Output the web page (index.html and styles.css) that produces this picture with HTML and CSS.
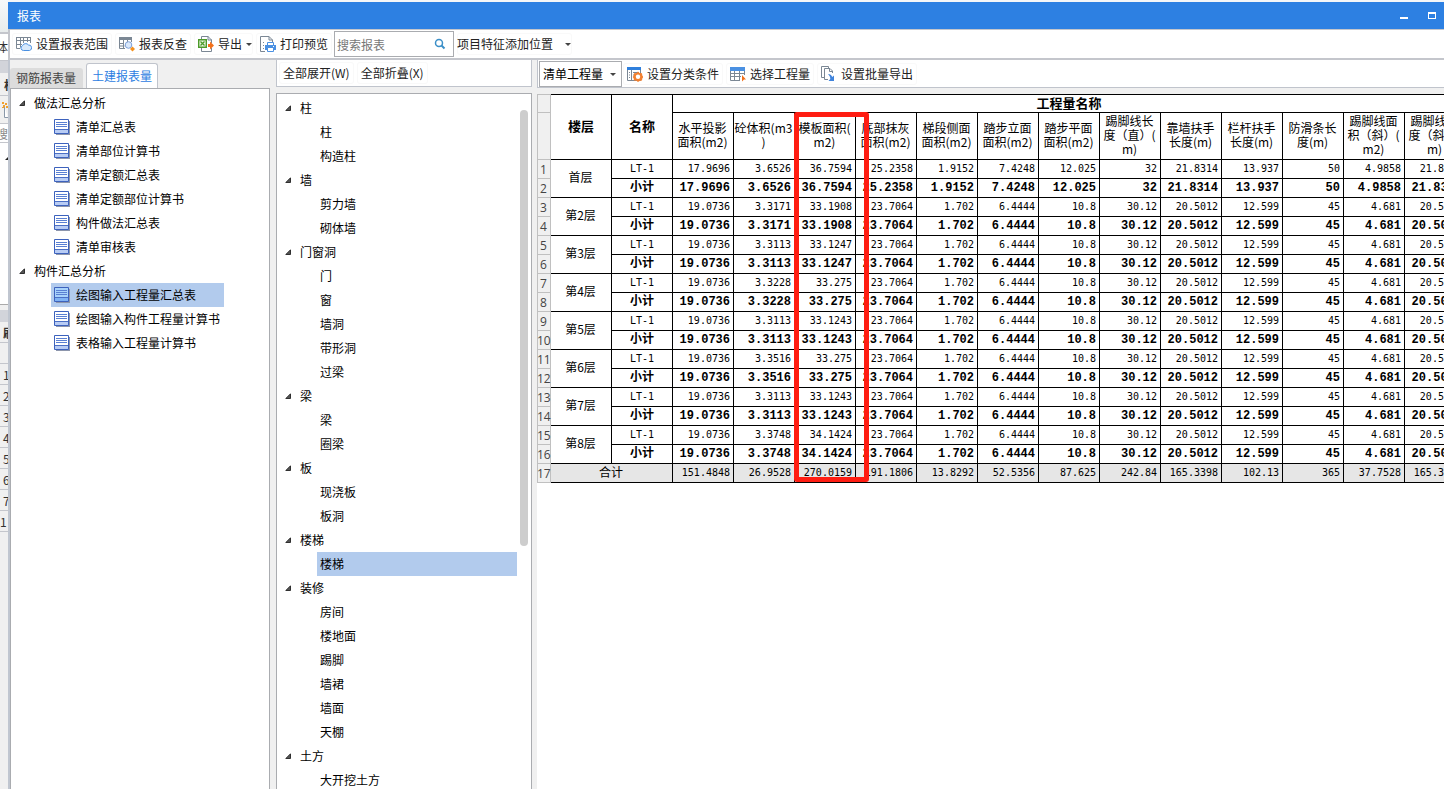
FILE: index.html
```html
<!DOCTYPE html>
<html lang="zh-CN">
<head>
<meta charset="utf-8">
<title>报表</title>
<link rel="stylesheet" href="styles.css">
</head>
<body>
<svg class="defs" aria-hidden="true">
  <symbol id="doc" viewBox="0 0 16 16">
    <path fill="#8d96ac" d="M2 2h14v14H2z"/>
    <path class="doc-page" d="M.5.5h14v14H.5z" stroke="#3d62bd"/>
    <path class="doc-foot" d="M1 11h13v3H1z"/>
    <path d="M1 10.5h13" stroke="#4b6fc4"/>
    <path d="M2 3.5h11M2 5.5h11M2 7.5h11" stroke="#5a80d2"/>
  </symbol>
  <symbol id="tri" viewBox="0 0 6 6"><path d="M5.500 .8v4.700H.8z" fill="#555" stroke="#222" stroke-width=".9"/></symbol>
</svg>
<div class="desktop">
  <aside class="behind" aria-hidden="true">
    <div class="b-top"></div>
    <div class="b-line1">体</div>
    <div class="b-band"></div>
    <div class="b-head">构</div>
    <div class="b-icon"><svg width="8" height="16"><path d="M4.500 5v10.500H8" fill="#fff" stroke="#8a98a8"/><path d="M2 0h2v2H2zM5 1h2v2H5zM3 3h2v2H3zM6 4h2v2H6zM2 5h2v1H2z" fill="#f0a030"/></svg></div>
    <div class="b-search">搜</div>
    <div class="b-blank"><svg width="3" height="3"><path d="M3 0v3H0z" fill="#222"/></svg></div>
    <div class="b-gap"></div>
    <div class="b-band2"></div>
    <div class="b-row b-strong">刷</div>
    <div class="b-row"></div>
    <div class="b-row">1</div><div class="b-row">2</div><div class="b-row">3</div><div class="b-row">4</div><div class="b-row">5</div><div class="b-row">6</div><div class="b-row">7</div><div class="b-row b-wide">1</div>
  </aside>
  <main class="window">
    <header class="titlebar">
      <h1>报表</h1>
      <button class="winbtn" aria-label="最小化"><svg width="8" height="8"><path d="M0 5h8v2H0z" fill="#fff"/></svg></button>
      <button class="winbtn" aria-label="最大化"><svg width="8" height="8"><path d="M0 0h8v7H0zM1 2v4h6V2z" fill="#fff" fill-rule="evenodd"/></svg></button>
    </header>
    <div class="toolbar main-tools">
      <button class="tool"><svg width="16" height="16" fill="none"><path d="M4 12.500H.5V1.500h14V7M.5 4.500h14M.5 8.500H6M4.500 1.500v10M7.500 1.500V7M11.500 1.500V6" stroke="#7b8794"/><path d="M0 1h15v1H0z" fill="#7b8794"/><path d="M7.500 14.500a2.500 2.500 0 0 1-1-4.800 3.500 3.500 0 0 1 6-.7 2.800 2.800 0 0 1 1 5.500z" fill="#d8e9fb" stroke="#4a90e2"/></svg>设置报表范围</button>
      <button class="tool"><svg width="16" height="16" fill="none"><path d="M0 1h13v3H0z" fill="#7b8794"/><path d="M.5 2v10.500H6M.5 7.500H5M.5 10h5M4.500 3v9M8.500 3v3M12.500 3v3" stroke="#7b8794"/><circle cx="9.500" cy="9" r="3.300" fill="#d9e8fb" stroke="#7da0d8"/><path d="M13.500 10.500l2.500 2.500-2.500 2.500-2.500-2.500z" fill="#f5921e"/></svg>报表反查</button>
      <button class="tool has-menu"><svg width="16" height="16" fill="none"><path d="M3.500 3V.5H10L13.500 4v3M13.500 12v3.500h-10V12" stroke="#7b8794"/><path d="M10 0v4h4" stroke="#7b8794"/><path d="M.7 3.700h7.600v7.600H.7z" fill="#eaf6e2" stroke="#4c9a2a" stroke-width="1.400"/><path d="M2.500 5.500l4 4M6.500 5.500l-4 4" stroke="#4c9a2a" stroke-width="1.300"/><path d="M10 8h2V5.500l4 4-4 4V11h-2z" fill="#f2711c"/></svg>导出<i class="caret"></i></button>
      <button class="tool"><svg width="16" height="16" fill="none"><path d="M5 15.500H.5V.5H9L12.500 4v2M9 .5V4h3.500" stroke="#7b8794"/><path d="M3 6.500h2M3 9.500h1M3 12.500h1" stroke="#7b8794" stroke-dasharray="1 1"/><path d="M7.500 9V6.500h6V9" fill="#fff" stroke="#4a90e2"/><path d="M5 9h11v5H5z" fill="#4a90e2"/><path d="M7.500 11.500h6v4h-6z" fill="#fff" stroke="#4a90e2"/><path d="M13 10h1v1h-1z" fill="#fff"/></svg>打印预览</button>
      <label class="search"><input type="text" placeholder="搜索报表" aria-label="搜索报表"><svg width="12" height="12" fill="none"><circle cx="5" cy="5" r="3.500" stroke="#3b8fc8" stroke-width="1.500"/><path d="M7.500 7.500l3 3" stroke="#3b8fc8" stroke-width="2"/></svg></label>
      <button class="tool position">项目特征添加位置<i class="caret"></i></button>
    </div>
    <div class="panes">
      <section class="reports">
        <nav class="tabs"><button class="tab">钢筋报表量</button><button class="tab active">土建报表量</button></nav>
        <div class="tree box">
          <div class="group"><svg><use href="#tri"/></svg>做法汇总分析</div>
          <button class="leaf"><svg><use href="#doc"/></svg>清单汇总表</button>
          <button class="leaf"><svg><use href="#doc"/></svg>清单部位计算书</button>
          <button class="leaf"><svg><use href="#doc"/></svg>清单定额汇总表</button>
          <button class="leaf"><svg><use href="#doc"/></svg>清单定额部位计算书</button>
          <button class="leaf"><svg><use href="#doc"/></svg>构件做法汇总表</button>
          <button class="leaf"><svg><use href="#doc"/></svg>清单审核表</button>
          <div class="group"><svg><use href="#tri"/></svg>构件汇总分析</div>
          <button class="leaf selected"><svg><use href="#doc"/></svg>绘图输入工程量汇总表</button>
          <button class="leaf"><svg><use href="#doc"/></svg>绘图输入构件工程量计算书</button>
          <button class="leaf"><svg><use href="#doc"/></svg>表格输入工程量计算书</button>
        </div>
      </section>
      <section class="elements">
        <div class="toolbar sub-tools"><button class="tool">全部展开(W)</button><button class="tool">全部折叠(X)</button></div>
        <div class="tree box">
          <div class="nodes">
            <div class="group"><svg><use href="#tri"/></svg>柱</div>
            <button class="leaf">柱</button><button class="leaf">构造柱</button>
            <div class="group"><svg><use href="#tri"/></svg>墙</div>
            <button class="leaf">剪力墙</button><button class="leaf">砌体墙</button>
            <div class="group"><svg><use href="#tri"/></svg>门窗洞</div>
            <button class="leaf">门</button><button class="leaf">窗</button><button class="leaf">墙洞</button><button class="leaf">带形洞</button><button class="leaf">过梁</button>
            <div class="group"><svg><use href="#tri"/></svg>梁</div>
            <button class="leaf">梁</button><button class="leaf">圈梁</button>
            <div class="group"><svg><use href="#tri"/></svg>板</div>
            <button class="leaf">现浇板</button><button class="leaf">板洞</button>
            <div class="group"><svg><use href="#tri"/></svg>楼梯</div>
            <button class="leaf selected">楼梯</button>
            <div class="group"><svg><use href="#tri"/></svg>装修</div>
            <button class="leaf">房间</button><button class="leaf">楼地面</button><button class="leaf">踢脚</button><button class="leaf">墙裙</button><button class="leaf">墙面</button><button class="leaf">天棚</button>
            <div class="group"><svg><use href="#tri"/></svg>土方</div>
            <button class="leaf">大开挖土方</button>
          </div>
          <div class="scroll"><div class="thumb"></div></div>
        </div>
      </section>
      <section class="result">
        <div class="toolbar grid-tools">
          <label class="picker"><select aria-label="工程量类型"><option>清单工程量</option></select><i class="caret"></i></label>
          <button class="tool"><svg width="16" height="16" fill="none"><path d="M.5 1.500h13v13H.5z" fill="#fff" stroke="#7b8794"/><path d="M0 1h14v3H0z" fill="#2f7fdc"/><path d="M4.500 4v10" stroke="#7b8794"/><path d="M2 6.500h1M2 9h1M2 11.500h1M6 6.500h6M6 9h2" stroke="#7b8794"/><path d="M11 5.500l1.500 1.500 2.500.3.300 2.200 1 1.500-1 1.500-.3 2-2.500.5L11 16l-1.500-1.200-2.500-.3-.3-2-1-1.500 1-1.500.3-2.200 2.500-.3z" fill="#f28030"/><circle cx="11" cy="10.800" r="2.200" fill="#fff"/></svg>设置分类条件</button>
          <button class="tool"><svg width="16" height="16" fill="none"><path d="M.5 1.500h14v12H.5z" fill="#fff"/><path d="M.5 4v10.500H10M14.500 4v5M0 7.500h15M0 10.500h11M4.500 4v10M9.500 4v10" stroke="#7b8794"/><path d="M0 1h15v4H0z" fill="#4a90e2"/><path d="M12 9l4 4.500h-2l-2 2z" fill="#f2711c"/></svg>选择工程量</button>
          <button class="tool"><svg width="16" height="16" fill="none"><path d="M3 11.500H.5V.5h7V2" stroke="#7b8794"/><path d="M7 13.500H3.500V2.500H9L11.500 5v2M8.500 2.500v3h3" stroke="#7b8794"/><path d="M7 8c2 0 3.500 1 4.300 3L13 9.500V15H7.500L9.300 13C9.300 11 8.500 9.500 7 8z" fill="#3f83dc"/></svg>设置批量导出</button>
        </div>
        <div class="sheet">
          <table>
            <colgroup><col class="c-num"><col span="15" class="c-data"></colgroup>
            <thead>
              <tr class="h1"><th class="n"></th><th rowspan="2">楼层</th><th rowspan="2">名称</th><th colspan="13">工程量名称</th></tr>
              <tr class="h2"><th class="n"></th><th>水平投影<br>面积(m2)</th><th>砼体积(m3<br>)</th><th>模板面积(<br>m2)</th><th>底部抹灰<br>面积(m2)</th><th>梯段侧面<br>面积(m2)</th><th>踏步立面<br>面积(m2)</th><th>踏步平面<br>面积(m2)</th><th>踢脚线长<br>度（直）(<br>m)</th><th>靠墙扶手<br>长度(m)</th><th>栏杆扶手<br>长度(m)</th><th>防滑条长<br>度(m)</th><th>踢脚线面<br>积（斜）(<br>m2)</th><th>踢脚线长<br>度（斜）(<br>m)</th></tr>
            </thead>
            <tbody>
              <tr><th class="n">1<th class="floor" rowspan="2">首层<td class="name">LT-1<td>17.9696<td>3.6526<td>36.7594<td>25.2358<td>1.9152<td>7.4248<td>12.025<td>32<td>21.8314<td>13.937<td>50<td>4.9858<td>21.8314
              <tr class="sub"><th class="n">2<td class="name">小计<td>17.9696<td>3.6526<td>36.7594<td>25.2358<td>1.9152<td>7.4248<td>12.025<td>32<td>21.8314<td>13.937<td>50<td>4.9858<td>21.8314
              <tr><th class="n">3<th class="floor" rowspan="2">第2层<td class="name">LT-1<td>19.0736<td>3.3171<td>33.1908<td>23.7064<td>1.702<td>6.4444<td>10.8<td>30.12<td>20.5012<td>12.599<td>45<td>4.681<td>20.5012
              <tr class="sub"><th class="n">4<td class="name">小计<td>19.0736<td>3.3171<td>33.1908<td>23.7064<td>1.702<td>6.4444<td>10.8<td>30.12<td>20.5012<td>12.599<td>45<td>4.681<td>20.5012
              <tr><th class="n">5<th class="floor" rowspan="2">第3层<td class="name">LT-1<td>19.0736<td>3.3113<td>33.1247<td>23.7064<td>1.702<td>6.4444<td>10.8<td>30.12<td>20.5012<td>12.599<td>45<td>4.681<td>20.5012
              <tr class="sub"><th class="n">6<td class="name">小计<td>19.0736<td>3.3113<td>33.1247<td>23.7064<td>1.702<td>6.4444<td>10.8<td>30.12<td>20.5012<td>12.599<td>45<td>4.681<td>20.5012
              <tr><th class="n">7<th class="floor" rowspan="2">第4层<td class="name">LT-1<td>19.0736<td>3.3228<td>33.275<td>23.7064<td>1.702<td>6.4444<td>10.8<td>30.12<td>20.5012<td>12.599<td>45<td>4.681<td>20.5012
              <tr class="sub"><th class="n">8<td class="name">小计<td>19.0736<td>3.3228<td>33.275<td>23.7064<td>1.702<td>6.4444<td>10.8<td>30.12<td>20.5012<td>12.599<td>45<td>4.681<td>20.5012
              <tr><th class="n">9<th class="floor" rowspan="2">第5层<td class="name">LT-1<td>19.0736<td>3.3113<td>33.1243<td>23.7064<td>1.702<td>6.4444<td>10.8<td>30.12<td>20.5012<td>12.599<td>45<td>4.681<td>20.5012
              <tr class="sub"><th class="n">10<td class="name">小计<td>19.0736<td>3.3113<td>33.1243<td>23.7064<td>1.702<td>6.4444<td>10.8<td>30.12<td>20.5012<td>12.599<td>45<td>4.681<td>20.5012
              <tr><th class="n">11<th class="floor" rowspan="2">第6层<td class="name">LT-1<td>19.0736<td>3.3516<td>33.275<td>23.7064<td>1.702<td>6.4444<td>10.8<td>30.12<td>20.5012<td>12.599<td>45<td>4.681<td>20.5012
              <tr class="sub"><th class="n">12<td class="name">小计<td>19.0736<td>3.3516<td>33.275<td>23.7064<td>1.702<td>6.4444<td>10.8<td>30.12<td>20.5012<td>12.599<td>45<td>4.681<td>20.5012
              <tr><th class="n">13<th class="floor" rowspan="2">第7层<td class="name">LT-1<td>19.0736<td>3.3113<td>33.1243<td>23.7064<td>1.702<td>6.4444<td>10.8<td>30.12<td>20.5012<td>12.599<td>45<td>4.681<td>20.5012
              <tr class="sub"><th class="n">14<td class="name">小计<td>19.0736<td>3.3113<td>33.1243<td>23.7064<td>1.702<td>6.4444<td>10.8<td>30.12<td>20.5012<td>12.599<td>45<td>4.681<td>20.5012
              <tr><th class="n">15<th class="floor" rowspan="2">第8层<td class="name">LT-1<td>19.0736<td>3.3748<td>34.1424<td>23.7064<td>1.702<td>6.4444<td>10.8<td>30.12<td>20.5012<td>12.599<td>45<td>4.681<td>20.5012
              <tr class="sub"><th class="n">16<td class="name">小计<td>19.0736<td>3.3748<td>34.1424<td>23.7064<td>1.702<td>6.4444<td>10.8<td>30.12<td>20.5012<td>12.599<td>45<td>4.681<td>20.5012
              <tr class="total"><th class="n">17<th class="floor" colspan="2">合计<td>151.4848<td>26.9528<td>270.0159<td>191.1806<td>13.8292<td>52.5356<td>87.625<td>242.84<td>165.3398<td>102.13<td>365<td>37.7528<td>165.3398
            </tbody>
          </table>
          <div class="highlight"></div>
        </div>
      </section>
    </div>
  </main>
</div>
</body>
</html>
```

FILE: styles.css
```css
* { box-sizing: border-box; }
body {
  margin: 0;
  overflow: hidden;
  background: #f0f0f0;
  color: #000;
  font: 12px/16px "Noto Sans CJK SC", sans-serif;
}
button, input, select {
  margin: 0;
  padding: 0;
  border: 0;
  background: none;
  color: inherit;
  font: inherit;
}
svg { flex: none; display: block; }
.defs { position: absolute; width: 0; height: 0; }

.desktop { display: flex; height: 100vh; }

/* sliver of the parent window */
.behind { width: 8px; flex: none; overflow: hidden; color: #333; white-space: nowrap; }
.b-top { height: 34px; background: linear-gradient(#f8f9fa, #e8ecec); border-bottom: 2px solid #c4c6cc; }
.b-line1 { height: 27px; line-height: 26px; background: #fff; border-bottom: 1px solid #c4c6cc; text-indent: -4px; }
.b-band, .b-band2 { height: 12px; background: #d2d4da; }
.b-head { height: 23px; line-height: 23px; padding-left: 4px; font-weight: bold; border-bottom: 1px solid #c4c6cc; }
.b-icon { height: 27px; padding-top: 6px; }
.b-search { height: 20px; line-height: 19px; text-indent: -4px; color: #888; background: #fff; border: solid #c4c6cc; border-width: 1px 0; }
.b-blank { height: 162px; padding: 14px 0 0 5px; background: #fff; border-bottom: 1px solid #aaa; }
.b-gap { height: 5px; }
.b-row { height: 21px; line-height: 21px; padding-left: 3px; border-bottom: 1px solid #c4c6cc; }
.b-strong { font-weight: bold; }
.b-wide { padding-left: 0; }

.window {
  flex: 1;
  min-width: 0;
  display: flex;
  flex-direction: column;
  border-top: 2px solid #f4f6f8;
}
.titlebar { display: flex; align-items: center; gap: 20px; height: 27px; padding: 0 8px 0 9px; background: #2d80e2; color: #fff; }
.titlebar h1 { flex: 1; margin: 0; font-size: 12px; font-weight: normal; }
.winbtn { width: 8px; height: 8px; }

.toolbar { display: flex; align-items: center; gap: 3px; background: #fff; color: #222; white-space: nowrap; }
.main-tools { height: 31px; padding: 0 4px 0 2px; border: solid #c4c6cc; border-width: 1px 0 2px 2px; }
.tool {
  display: flex;
  align-items: center;
  gap: 4px;
  height: 22px;
  padding: 0 4px;
  border-radius: 3px;
  box-shadow: inset 0 0 0 1px #f9f9f9;
}
.has-menu { padding-right: 1px; }
.position { padding: 0 1px 0 0; gap: 12px; }
.caret { flex: none; border: 3px solid transparent; border-top-color: #444; border-bottom: 0; }
.search { display: flex; align-items: center; width: 120px; height: 26px; margin-left: -1px; padding: 0 7px 0 2px; border: 1px solid #aaacb0; }
.search input { flex: 1; min-width: 0; height: 22px; outline: 0; }
.search input::placeholder { color: #777; opacity: 1; }

.panes { flex: 1; min-height: 0; display: flex; border-left: 2px solid #c0c6d0; }
.box { background: #fff; border: 1px solid #aaacb0; border-bottom: 0; }

.reports { width: 260px; flex: none; display: flex; flex-direction: column; margin-right: 6px; }
.tabs { display: flex; align-items: flex-end; gap: 3px; height: 28px; }
.tab { height: 20px; padding: 0 7px 0 6px; color: #444; background: #dcdcdc; border-radius: 3px 3px 0 0; }
.tab.active { height: 25px; padding: 0 5px; color: #2d80e2; background: #fff; border: 1px solid #c0c4cc; border-bottom: 0; }
.tree { flex: 1; min-height: 0; overflow: hidden; padding-top: 2px; }
.group { display: flex; align-items: center; gap: 9px; height: 24px; padding-left: 8px; }
.group svg { width: 6px; height: 6px; }
.leaf { display: flex; align-items: center; height: 24px; text-align: left; white-space: nowrap; }
.leaf.selected { background: #b2cbed; }
.reports .leaf { gap: 6px; margin-left: 40px; padding: 0 4px 0 3px; }
.reports .leaf.selected { padding-right: 28px; }
.leaf svg { width: 16px; height: 16px; --page: #fff; --foot: #b8ccf4; }
.leaf.selected svg { --page: #a8d2fb; --foot: #7fb2f4; }
.doc-page { fill: var(--page); }
.doc-foot { fill: var(--foot); }

.elements { width: 256px; flex: none; display: flex; flex-direction: column; gap: 6px; margin-right: 5px; }
.sub-tools { height: 27px; padding-left: 2px; border: solid #c0c4cc; border-width: 0 1px 1px; }
.elements .tree { display: flex; }
.nodes { flex: 1; }
.elements .leaf { width: 200px; margin-left: 40px; padding-left: 3px; }
.scroll { width: 11px; padding-top: 14px; }
.thumb { width: 8px; height: 436px; background: #cdcdcd; border-radius: 4px; }

.result { flex: 1; min-width: 0; display: flex; flex-direction: column; gap: 6px; }
.grid-tools { height: 28px; padding-left: 1px; border-bottom: 1px solid #c0c4cc; border-left: 1px solid #c0c4cc; }
.picker { position: relative; width: 83px; height: 26px; margin-right: -2px; border: 1px solid #aaacb0; }
.picker select { width: 100%; height: 100%; padding-left: 3px; appearance: none; color: #000; outline: 0; }
.picker .caret { position: absolute; right: 5px; top: 11px; }
.sheet { position: relative; flex: 1; min-height: 0; overflow: hidden; background: #fff; }

table { width: 929px; table-layout: fixed; border-collapse: separate; border-spacing: 0; }
.c-num { width: 14px; }
.c-data { width: 61px; }
th, td { padding: 0; height: 19px; line-height: 18px; border: solid #000; border-width: 0 1px 1px 0; white-space: nowrap; }
th { font-weight: normal; text-align: center; }
td { padding-right: 3px; text-align: right; font-family: "DejaVu Sans Mono", "Noto Sans CJK SC", monospace; font-size: 10px; }
.h1 th { padding-bottom: 3px; border-top: 1px solid #000; font-size: 13px; font-weight: bold; line-height: 13px; }
.h2 th { height: 47px; padding: 0 1px 2px 0; line-height: 14px; }
.floor { padding: 0 1px 3px 0; }
.name { padding: 0; text-align: center; }
.sub td { font-family: "Liberation Mono", "Noto Sans CJK SC", monospace; font-size: 12px; font-weight: bold; }
.total .floor, .total td { background: #e6e6e6; }
.total .floor { padding-bottom: 2px; line-height: 16px; }
th.n, .h1 th.n {
  padding: 2px 0 0;
  background: #f0f0f0;
  border-color: #c0c0c0;
  border-left: 1px solid #c0c0c0;
  color: #444;
  font-family: "Open Sans", sans-serif;
  font-size: 12px;
  line-height: 16px;
  text-indent: -1px;
}

/* marker frame over the formwork-area column */
.highlight { position: absolute; left: 257px; top: 18px; width: 75px; height: 370px; border: 5px solid #ff1d12; border-radius: 3px; }
```
